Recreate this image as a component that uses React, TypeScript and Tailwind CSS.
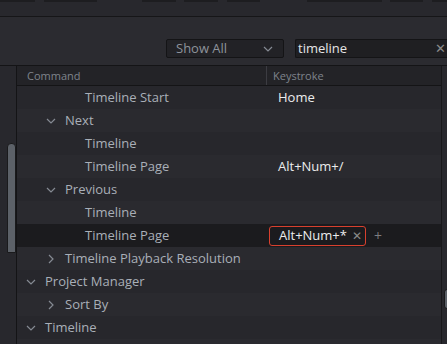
import React from "react";

type Row = { label: string; level: number; chev?: "down" | "right"; key?: string; selected?: boolean };

const rows: Row[] = [
  { label: "Timeline Start", level: 2, key: "Home" },
  { label: "Next", level: 1, chev: "down" },
  { label: "Timeline", level: 2 },
  { label: "Timeline Page", level: 2, key: "Alt+Num+/" },
  { label: "Previous", level: 1, chev: "down" },
  { label: "Timeline", level: 2 },
  { label: "Timeline Page", level: 2, key: "Alt+Num+*", selected: true },
  { label: "Timeline Playback Resolution", level: 1, chev: "right" },
  { label: "Project Manager", level: 0, chev: "down" },
  { label: "Sort By", level: 1, chev: "right" },
  { label: "Timeline", level: 0, chev: "down" },
  { label: "", level: 0 },
];

const ChevDown = () => (
  <svg width="10" height="6" viewBox="0 0 10 6" className="shrink-0">
    <path d="M1 1 L5 5 L9 1" fill="none" stroke="#858a93" strokeWidth="1.2" />
  </svg>
);
const ChevRight = () => (
  <svg width="6" height="10" viewBox="0 0 6 10" className="shrink-0">
    <path d="M1 1 L5 5 L1 9" fill="none" stroke="#858a93" strokeWidth="1.2" />
  </svg>
);

const topSegs = [
  [0, 35],
  [44, 97],
  [142, 176],
  [184, 218],
  [227, 260],
  [307, 382],
  [390, 423],
  [432, 447],
];

export default function App() {
  return (
    <div
      className="w-[447px] h-[344px] overflow-hidden flex flex-col bg-[#28282d]"
      style={{ fontFamily: '"Open Sans", "Noto Sans", sans-serif' }}
    >
      {/* top strip */}
      <div className="h-[16px] shrink-0 relative bg-[#28282d]">
        {topSegs.map(([a, b], i) => (
          <div
            key={i}
            className="absolute top-0 h-[2px] bg-[#1d1d20]"
            style={{ left: a, width: b - a }}
          />
        ))}
      </div>
      <div className="h-px shrink-0 bg-[#161618]" />
      {/* toolbar */}
      <div className="h-[48px] shrink-0 bg-[#2b2b30] flex items-end pb-[7px] pl-[166px] gap-[11px]">
        <div className="w-[118px] h-[19px] rounded-[2px] border border-[#141416] bg-[#222226] flex items-center pl-[9px] pr-[10px] justify-between">
          <span className="text-[13px] text-[#8e939b] leading-none">Show All</span>
          <ChevDown />
        </div>
        <div className="flex-1 h-[19px] rounded-l-[2px] border border-r-0 border-[#141416] bg-[#1f1f22] flex items-center pl-[2px] pr-[1px] justify-between">
          <span className="text-[13px] text-[#e6e6e6] leading-none">timeline</span>
          <span className="text-[13px] text-[#8a8a8a] leading-none">✕</span>
        </div>
      </div>
      <div className="h-px shrink-0 bg-[#141416]" />
      {/* list */}
      <div className="flex flex-1 min-h-0">
        <div className="w-[17px] shrink-0 bg-[#28282d] border-r border-[#141416] relative">
          <div className="absolute left-[7px] top-[77px] w-[9px] h-[110px] rounded-t-[4px] bg-[#5c6168] border border-[#1a1a1c]" />
        </div>
        <div className="w-[425px] shrink-0 flex flex-col border-r border-[#18181a]">
          <div className="h-[20px] shrink-0 flex bg-[#232327] border-b border-[#141416]">
            <div className="w-[250px] border-r border-[#3c3c42] flex items-center pl-[10px]">
              <span className="text-[11px] text-[#7f848c] leading-none">Command</span>
            </div>
            <div className="flex-1 flex items-center pl-[6px]">
              <span className="text-[11px] text-[#7f848c] leading-none">Keystroke</span>
            </div>
          </div>
          {rows.map((r, i) => {
            const bg = r.selected ? "bg-[#1b1b1e]" : i % 2 === 0 ? "bg-[#27272c]" : "bg-[#2a2a2f]";
            return (
              <div key={i} className={`h-[23px] shrink-0 flex ${bg}`}>
                <div className="w-[251px] flex items-center" style={{ paddingLeft: 8 + r.level * 20 }}>
                  <div className="w-[20px] flex items-center justify-start pl-[1px]">
                    {r.chev === "down" && <ChevDown />}
                    {r.chev === "right" && (
                      <div className="pl-[2px]">
                        <ChevRight />
                      </div>
                    )}
                  </div>
                  <span className="text-[13px] text-[#a9afb8] leading-none whitespace-nowrap">{r.label}</span>
                </div>
                <div className="flex-1 flex items-center">
                  {r.selected ? (
                    <div className="flex items-center ml-[1px]">
                      <div className="h-[20px] w-[97px] rounded-[3px] border border-[#d8402e] flex items-center pl-[9px] gap-[5px]">
                        <span className="text-[13px] text-[#ececec] leading-none">{r.key}</span>
                        <span className="text-[12px] text-[#8a8a8a] leading-none">✕</span>
                      </div>
                      <span className="ml-[8px] text-[14px] text-[#7d7d80] leading-none">+</span>
                    </div>
                  ) : (
                    r.key && <span className="pl-[10px] text-[13px] text-[#ececec] leading-none">{r.key}</span>
                  )}
                </div>
              </div>
            );
          })}
        </div>
        <div className="flex-1 relative bg-[#28282d]">
          <div className="absolute left-[2px] top-[223px] w-[6px] h-[20px] rounded-[3px] bg-[#5c6168] border border-[#1a1a1c]" />
        </div>
      </div>
    </div>
  );
}
